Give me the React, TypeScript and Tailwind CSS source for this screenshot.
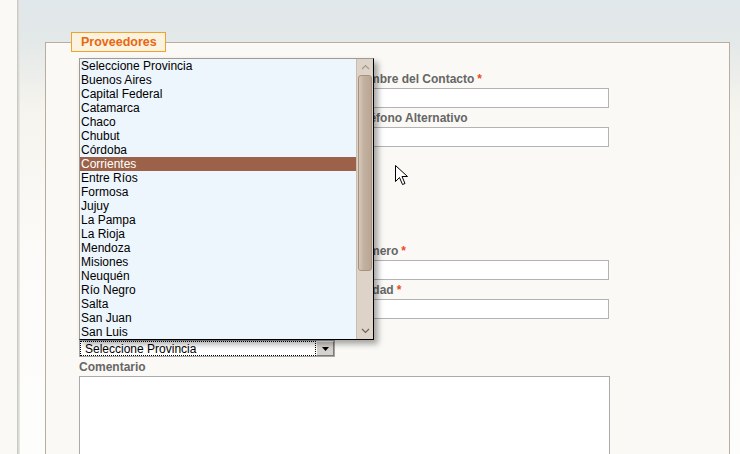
import React from "react";

const provincias = [
  "Seleccione Provincia",
  "Buenos Aires",
  "Capital Federal",
  "Catamarca",
  "Chaco",
  "Chubut",
  "Córdoba",
  "Corrientes",
  "Entre Ríos",
  "Formosa",
  "Jujuy",
  "La Pampa",
  "La Rioja",
  "Mendoza",
  "Misiones",
  "Neuquén",
  "Río Negro",
  "Salta",
  "San Juan",
  "San Luis",
];

function Label({ text, required }: { text: string; required?: boolean }) {
  return (
    <div className="h-[14px] text-[12px] leading-[14px] font-bold text-[#666] whitespace-nowrap">
      {text}
      {required && <span className="ml-[3px] text-[#ee4a1e]">*</span>}
    </div>
  );
}

function Field({ label, required, className }: { label: string; required?: boolean; className?: string }) {
  return (
    <div className={className}>
      <Label text={label} required={required} />
      <div className="mt-[2px] h-[20px] w-[256px] border border-[#b3b3b3] bg-white" />
    </div>
  );
}

function Cursor() {
  return (
    <svg width="13" height="21" viewBox="0 0 13 21" className="absolute left-[375px] top-[165px]">
      <path d="M0.5 0.5 L0.5 16.5 L4.5 12.5 L7.5 19.5 L10 18.5 L7 11.5 L12.5 11.5 Z" fill="white" stroke="black" strokeWidth="1" />
    </svg>
  );
}

function ProvinciaList() {
  return (
    <div className="absolute left-0 bottom-full flex h-[282px] w-[295px] border-t border-l border-[#a39a8f] border-r border-b border-r-black border-b-black bg-[#eef6fd] shadow-[4px_4px_6px_rgba(0,0,0,0.35)]">
      <ul className="flex-1 text-[12px] leading-[14px] text-black">
        {provincias.map((p) => (
          <li
            key={p}
            className={
              p === "Corrientes"
                ? "h-[14px] pl-[1px] bg-[#9b6249] text-white"
                : "h-[14px] pl-[1px]"
            }
          >
            {p}
          </li>
        ))}
      </ul>
      {/* scrollbar */}
      <div className="flex w-[17px] flex-col border-l border-[#cbbcad] bg-[#ddd3c8]">
        <div className="flex h-[16px] items-center justify-center text-[#a8998a]">
          <svg width="9" height="6" viewBox="0 0 9 6">
            <path d="M1 5 L4.5 1.5 L8 5" fill="none" stroke="currentColor" strokeWidth="1.2" />
          </svg>
        </div>
        <div className="mx-[1px] h-[196px] rounded-[3px] border border-[#a6927f] bg-[linear-gradient(to_right,#d6c8ba,#c3b19f_40%,#b9a694)]" />
        <div className="flex-1" />
        <div className="flex h-[16px] items-center justify-center text-[#6d6258]">
          <svg width="9" height="6" viewBox="0 0 9 6">
            <path d="M1 1 L4.5 4.5 L8 1" fill="none" stroke="currentColor" strokeWidth="1.2" />
          </svg>
        </div>
      </div>
    </div>
  );
}

export default function App() {
  return (
    <div className="flex h-[454px] w-[740px] overflow-hidden bg-[#faf9f5] font-['Liberation_Sans',Arial,sans-serif]">
      <div className="w-[17px] shrink-0 bg-[#faf9f6]" />
      <div className="w-[3px] shrink-0 bg-[linear-gradient(to_right,#c3c3be,#d9d9d5,#ecebe7)]" />
      <div className="relative flex-1 bg-[linear-gradient(to_bottom,#e0e7ea_0px,#e3e8e8_40px,#f6f4ee_110px,#fcfbf9_260px,#fdfdfc_454px)] pl-[25px] pt-[32px]">
        <fieldset className="m-0 h-[500px] w-[685px] border border-[#b9ada1] bg-[#faf9f5] p-0">
          <legend className="ml-[25px] h-[20px] border border-[#f0a22a] bg-[#fcf2e0] pl-[9px] pr-[8px] text-[12.5px] leading-[18px] font-bold text-[#e8680e]">
            Proveedores
          </legend>
          <div className="pl-[33px] pt-[20px]">
            <div className="flex gap-[18px]">
              {/* left column (covered by the open list) */}
              <div className="w-[256px]">
                <Field label="Razón Social" required />
                <Field label="CUIT" required className="mt-[3px]" />
                <Field label="Dirección" required className="mt-[97px]" />
                <Field label="Código Postal" className="mt-[3px]" />
                <div className="mt-[21px]">
                  <div className="relative">
                    <ProvinciaList />
                    <div className="flex h-[17px] w-[256px] items-stretch border border-[#a5a5a5] bg-white">
                      <div className="flex flex-1 items-center border border-dotted border-black pl-[4px] text-[12px] leading-[14px] text-black">
                        Seleccione Provincia
                      </div>
                      <div className="flex w-[18px] items-center justify-center border-t border-l border-white border-r border-b border-r-[#7a7a7a] border-b-[#7a7a7a] bg-[#d6d3ce]">
                        <svg width="7" height="4" viewBox="0 0 7 4">
                          <path d="M0 0 L7 0 L3.5 4 Z" fill="black" />
                        </svg>
                      </div>
                    </div>
                  </div>
                </div>
              </div>
              {/* right column */}
              <div className="w-[256px]">
                <Field label="Nombre del Contacto" required />
                <Field label="Teléfono Alternativo" className="mt-[3px]" />
                <Field label="Número" required className="mt-[97px]" />
                <Field label="Ciudad" required className="mt-[3px]" />
              </div>
            </div>
            <div className="mt-[3px]">
              <Label text="Comentario" />
              <div className="mt-[2px] h-[120px] w-[531px] border border-[#aaaaaa] bg-white" />
            </div>
          </div>
        </fieldset>
        <Cursor />
      </div>
    </div>
  );
}
